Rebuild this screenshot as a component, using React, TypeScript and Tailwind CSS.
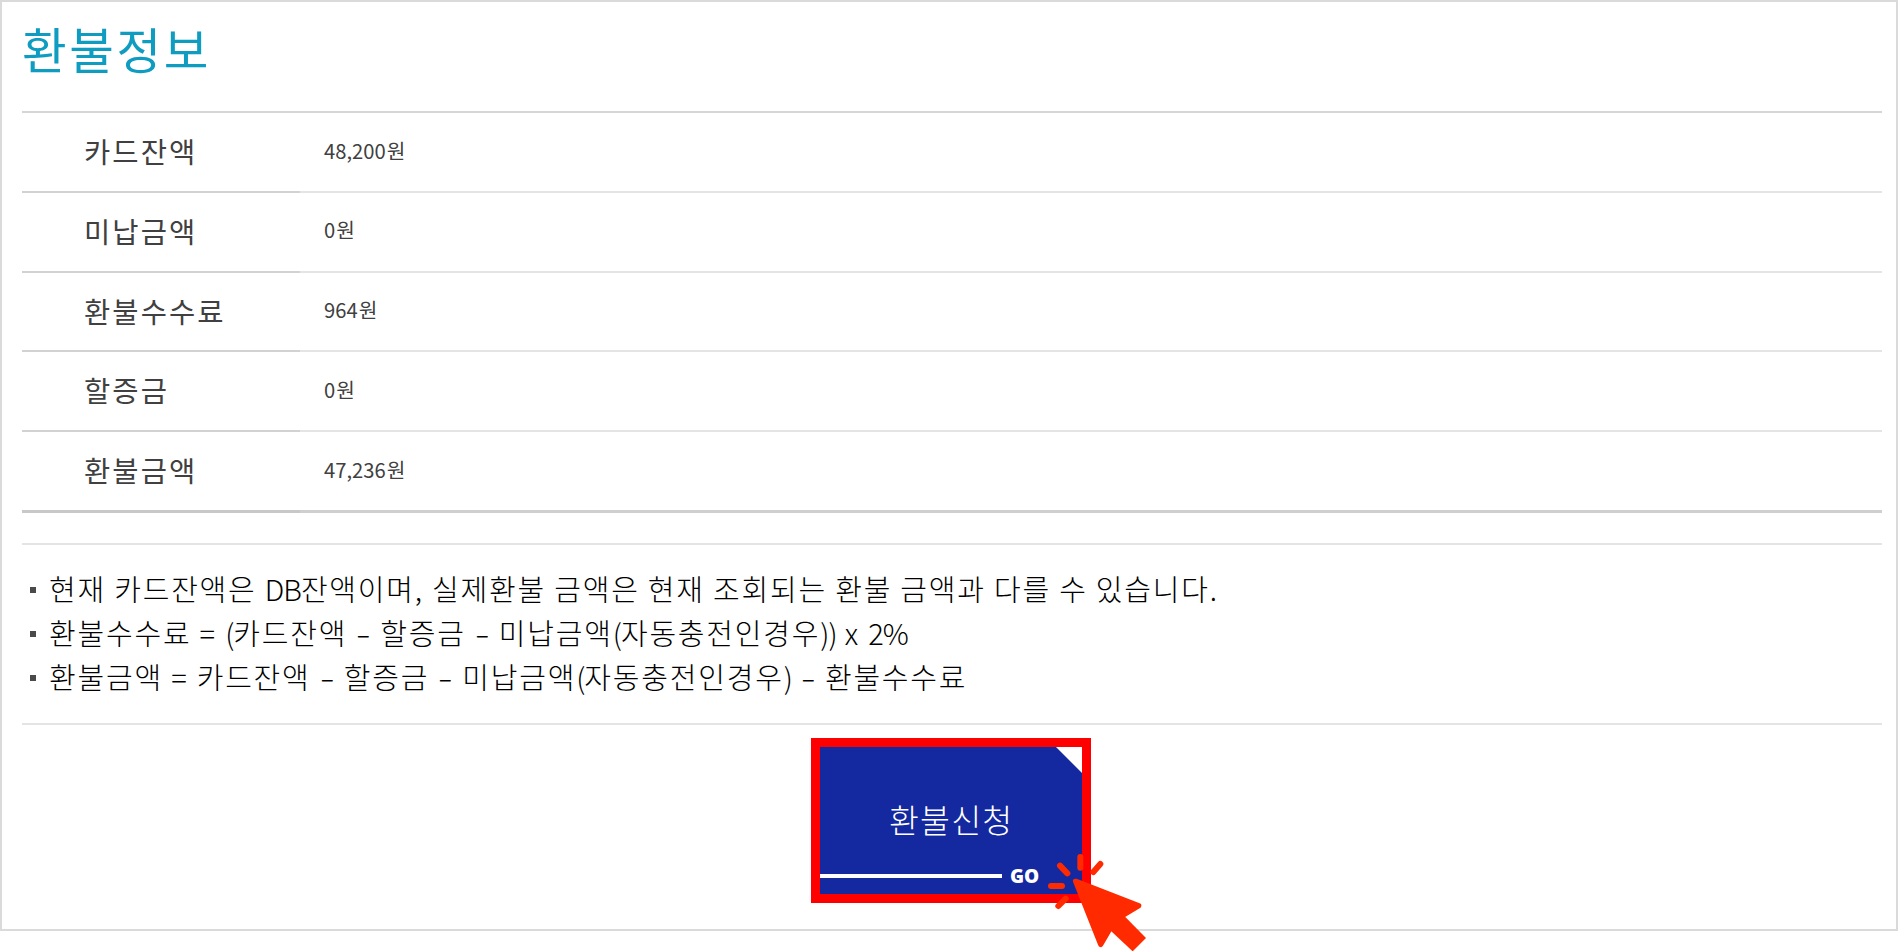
const rows = [
  { label: "카드잔액", value: "48,200원" },
  { label: "미납금액", value: "0원" },
  { label: "환불수수료", value: "964원" },
  { label: "할증금", value: "0원" },
  { label: "환불금액", value: "47,236원" }
];

function RefundTable() {
  return (
    <dl className="border-t-2 border-[#d6d6d6] text-[#404040]">
      {rows.map((row, i) => {
        const last = i === rows.length - 1;
        return (
          <div key={row.label} className={last ? "flex h-[80.75px]" : "flex h-[79.75px]"}>
            <dt
              className={`flex w-[278px] items-center pb-[1px] pl-[62px] text-[28.5px] tracking-[2.1px] ${
                last ? "border-b-3 border-[#c8c8c8]" : "border-b-2 border-[#d2d2d2]"
              }`}
            >
              {row.label}
            </dt>
            <dd
              className={`flex flex-1 items-center pb-[2px] pl-[24px] text-[20.2px] ${
                last ? "border-b-3 border-[#cfcfcf]" : "border-b-2 border-[#e4e4e4]"
              }`}
            >
              <span>{row.value.slice(0, -1)}</span>
              <span className="ml-[1px]">원</span>
            </dd>
          </div>
        );
      })}
    </dl>
  );
}

// Hangul is tracked wide, latin letters and brackets are not
function Note({ children }: { children: string }) {
  return (
    <li className="flex h-[44px] items-center">
      <span className="mt-[2px] mr-[13px] ml-[8px] h-[6px] w-[6px] bg-[#4a4a4a]" />
      <span className="whitespace-pre">
        {children.split(/(DB|2%|[()]+|-)/).map((part, i) => {
          if (part === "-") {
            return (
              <span key={i} className="inline-block scale-x-150 px-[3.5px] tracking-normal">
                -
              </span>
            );
          }
          if (i % 2) return <span key={i} className="tracking-[-1px]">{part}</span>;
          return part;
        })}
      </span>
    </li>
  );
}

function ClickCursor() {
  return (
    <svg
      className="absolute top-[104px] left-[225px] h-[100px] w-[105px]"
      viewBox="735 396 315 300"
      fill="#ff2a00"
      stroke="#ff2a00"
      strokeLinecap="round"
      strokeLinejoin="round"
    >
      <g strokeWidth="18">
        <path d="M841 414V446" />
        <path d="M780 440L802 463" />
        <path d="M753 501H786" />
        <path d="M775 561L797 539" />
        <path d="M880 459L901 435" />
      </g>
      <path strokeWidth="16" d="M827 487L1016 560L965 591L930 628L902 676Z" />
      <path stroke="none" d="M950 568L976 594L1038 657L998 697L933 636L905 608Z" />
    </svg>
  );
}

function ApplyButton() {
  return (
    <button
      type="button"
      className="relative ml-[789px] flex h-[165px] w-[280px] flex-col items-start border-9 border-[#ff0000] bg-[#14289f] text-white"
    >
      <svg className="absolute top-0 right-0 h-[26px] w-[26px]" viewBox="0 0 26 26">
        <path d="M0 0H26V26Z" fill="#fff" />
      </svg>
      <span className="mt-[48px] ml-[69px] text-[32.5px] leading-[48px] font-light tracking-[1.2px]">
        환불신청
      </span>
      <span className="mt-[22px] flex items-center">
        <span className="h-[4px] w-[182px] bg-white" />
        <span className="ml-[8px] font-['Open_Sans',sans-serif] text-[19px] leading-[22px] font-extrabold">
          GO
        </span>
      </span>
      <ClickCursor />
    </button>
  );
}

export default function App() {
  return (
    <div className="h-[952px] overflow-hidden bg-white font-['Noto_Sans_CJK_KR',sans-serif]">
      <section className="h-[931px] border-2 border-[#dadada] pr-[14px] pl-[20px]">
        <h1 className="h-[109px] pt-[11px] text-[48.5px] leading-[70px] tracking-[2.6px] text-[#0e9cc0]">
          환불정보
        </h1>
        <RefundTable />
        <ul className="mt-[30px] mb-[13px] h-[182px] border-y-2 border-[#e4e4e4] pt-[22px] text-[29px] font-light tracking-[1.8px] text-black">
          <Note>현재 카드잔액은 DB잔액이며, 실제환불 금액은 현재 조회되는 환불 금액과 다를 수 있습니다.</Note>
          <Note>환불수수료 = (카드잔액 - 할증금 - 미납금액(자동충전인경우)) x 2%</Note>
          <Note>환불금액 = 카드잔액 - 할증금 - 미납금액(자동충전인경우) - 환불수수료</Note>
        </ul>
        <ApplyButton />
      </section>
    </div>
  );
}
